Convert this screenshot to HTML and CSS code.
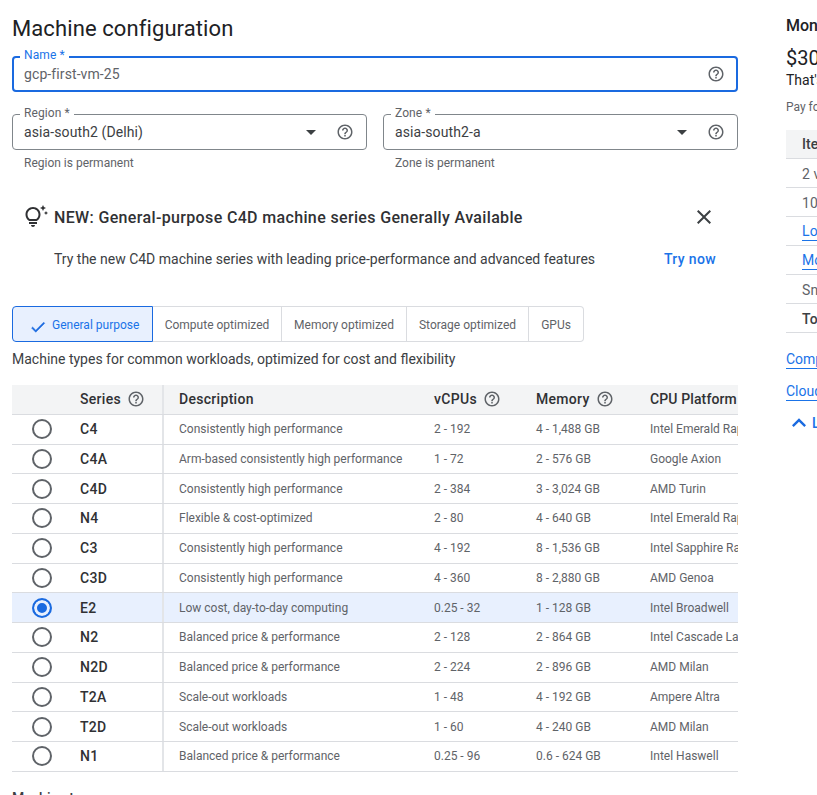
FILE: index.html
```html
<!DOCTYPE html>
<html lang="en">
<head>
<meta charset="utf-8">
<title>Machine configuration</title>
<link rel="stylesheet" href="styles.css">
</head>
<body>
<svg class="defs" width="0" height="0" aria-hidden="true">
  <symbol id="help" viewBox="0 0 24 24"><path d="M11 18h2v-2h-2v2zm1-16C6.48 2 2 6.48 2 12s4.48 10 10 10 10-4.48 10-10S17.52 2 12 2zm0 18c-4.41 0-8-3.59-8-8s3.59-8 8-8 8 3.59 8 8-3.59 8-8 8zm0-14c-2.21 0-4 1.79-4 4h2c0-1.1.9-2 2-2s2 .9 2 2c0 2-3 1.75-3 5h2c0-2.25 3-2.5 3-5 0-2.21-1.79-4-4-4z"/></symbol>
</svg>
<div class="page">
  <main class="main">
    <h1 class="title">Machine configuration</h1>

    <div class="field field-active">
      <span class="notch notch-active">Name *</span>
      <span class="value">gcp-first-vm-25</span>
      <svg class="help"><use href="#help"/></svg>
    </div>

    <div class="selects">
      <div>
        <div class="field">
          <span class="notch">Region *</span>
          <span class="value value-dark">asia-south2 (Delhi)</span>
          <span class="caret"></span>
          <svg class="help"><use href="#help"/></svg>
        </div>
        <p class="hint">Region is permanent</p>
      </div>
      <div>
        <div class="field">
          <span class="notch">Zone *</span>
          <span class="value value-dark">asia-south2-a</span>
          <span class="caret"></span>
          <svg class="help"><use href="#help"/></svg>
        </div>
        <p class="hint">Zone is permanent</p>
      </div>
    </div>

    <section class="banner">
      <div class="banner-head">
        <svg class="bulb" viewBox="0 0 24 24"><path d="M7 20h4c0 1.1-.9 2-2 2s-2-.9-2-2zm-2-1h8v-2H5v2zm11.5-9.5c0 3.82-2.66 5.86-3.77 6.5H5.27C4.16 15.36 1.5 13.32 1.5 9.5 1.5 5.36 4.86 2 9 2s7.5 3.36 7.5 7.5zm-2 0C14.5 6.47 12.03 4 9 4S3.5 6.47 3.5 9.5c0 2.47 1.49 3.89 2.35 4.5h6.3c.86-.61 2.35-2.03 2.35-4.5zm6.87-2.13L20 8l1.37.63L22 10l.63-1.37L24 8l-1.37-.63L22 6l-.63 1.37zM19 6l.94-2.06L22 3l-2.06-.94L19 0l-.94 2.06L16 3l2.06.94L19 6z"/></svg>
        <h2 class="banner-title">NEW: General-purpose C4D machine series Generally Available</h2>
        <svg class="close" viewBox="0 0 24 24"><path d="M19 6.41 17.59 5 12 10.59 6.41 5 5 6.41 10.59 12 5 17.59 6.41 19 12 13.41 17.59 19 19 17.59 13.41 12z"/></svg>
      </div>
      <div class="banner-body">
        <p class="banner-text">Try the new C4D machine series with leading price-performance and advanced features</p>
        <a class="try">Try now</a>
      </div>
    </section>

    <div class="tabs">
      <div class="tab tab-on">
        <svg class="check" viewBox="0 0 24 24"><path d="M9 16.17 4.83 12l-1.42 1.41L9 19 21 7l-1.41-1.41z"/></svg>
        General purpose
      </div>
      <div class="tab tab-w1">Compute optimized</div>
      <div class="tab tab-w2">Memory optimized</div>
      <div class="tab tab-w3">Storage optimized</div>
      <div class="tab tab-w4">GPUs</div>
    </div>
    <p class="tab-desc">Machine types for common workloads, optimized for cost and flexibility</p>

    <div class="table">
      <div class="row head">
        <div></div>
        <div class="cell">Series <svg class="help help-sm"><use href="#help"/></svg></div>
        <div class="cell cell-desc">Description</div>
        <div class="cell">vCPUs <svg class="help help-sm"><use href="#help"/></svg></div>
        <div class="cell">Memory <svg class="help help-sm"><use href="#help"/></svg></div>
        <div class="cell cell-platform">CPU Platform</div>
      </div>
      <div class="row"><div class="cell-radio"><span class="radio"></span></div><div class="cell name">C4</div><div class="cell cell-desc">Consistently high performance</div><div class="cell">2 - 192</div><div class="cell">4 - 1,488 GB</div><div class="cell">Intel Emerald Rapids</div></div>
      <div class="row"><div class="cell-radio"><span class="radio"></span></div><div class="cell name">C4A</div><div class="cell cell-desc">Arm-based consistently high performance</div><div class="cell">1 - 72</div><div class="cell">2 - 576 GB</div><div class="cell">Google Axion</div></div>
      <div class="row"><div class="cell-radio"><span class="radio"></span></div><div class="cell name">C4D</div><div class="cell cell-desc">Consistently high performance</div><div class="cell">2 - 384</div><div class="cell">3 - 3,024 GB</div><div class="cell">AMD Turin</div></div>
      <div class="row"><div class="cell-radio"><span class="radio"></span></div><div class="cell name">N4</div><div class="cell cell-desc">Flexible &amp; cost-optimized</div><div class="cell">2 - 80</div><div class="cell">4 - 640 GB</div><div class="cell">Intel Emerald Rapids</div></div>
      <div class="row"><div class="cell-radio"><span class="radio"></span></div><div class="cell name">C3</div><div class="cell cell-desc">Consistently high performance</div><div class="cell">4 - 192</div><div class="cell">8 - 1,536 GB</div><div class="cell">Intel Sapphire Rapids</div></div>
      <div class="row"><div class="cell-radio"><span class="radio"></span></div><div class="cell name">C3D</div><div class="cell cell-desc">Consistently high performance</div><div class="cell">4 - 360</div><div class="cell">8 - 2,880 GB</div><div class="cell">AMD Genoa</div></div>
      <div class="row row-on"><div class="cell-radio"><span class="radio radio-on"></span></div><div class="cell name">E2</div><div class="cell cell-desc">Low cost, day-to-day computing</div><div class="cell">0.25 - 32</div><div class="cell">1 - 128 GB</div><div class="cell">Intel Broadwell</div></div>
      <div class="row"><div class="cell-radio"><span class="radio"></span></div><div class="cell name">N2</div><div class="cell cell-desc">Balanced price &amp; performance</div><div class="cell">2 - 128</div><div class="cell">2 - 864 GB</div><div class="cell">Intel Cascade Lake</div></div>
      <div class="row"><div class="cell-radio"><span class="radio"></span></div><div class="cell name">N2D</div><div class="cell cell-desc">Balanced price &amp; performance</div><div class="cell">2 - 224</div><div class="cell">2 - 896 GB</div><div class="cell">AMD Milan</div></div>
      <div class="row"><div class="cell-radio"><span class="radio"></span></div><div class="cell name">T2A</div><div class="cell cell-desc">Scale-out workloads</div><div class="cell">1 - 48</div><div class="cell">4 - 192 GB</div><div class="cell">Ampere Altra</div></div>
      <div class="row"><div class="cell-radio"><span class="radio"></span></div><div class="cell name">T2D</div><div class="cell cell-desc">Scale-out workloads</div><div class="cell">1 - 60</div><div class="cell">4 - 240 GB</div><div class="cell">AMD Milan</div></div>
      <div class="row"><div class="cell-radio"><span class="radio"></span></div><div class="cell name">N1</div><div class="cell cell-desc">Balanced price &amp; performance</div><div class="cell">0.25 - 96</div><div class="cell">0.6 - 624 GB</div><div class="cell">Intel Haswell</div></div>
    </div>
    <h3 class="next">Machine type</h3>
  </main>

  <aside class="side">
    <h2 class="side-title">Monthly estimate</h2>
    <div class="price">$30.42</div>
    <div class="hourly">That's about $0.04 hourly</div>
    <p class="pay">Pay for what you use: no upfront costs and per second billing</p>
    <div class="items">
      <div class="item item-head">Item</div>
      <div class="item">2 vCPU + 4 GB memory</div>
      <div class="item">10 GB balanced persistent disk</div>
      <div class="item"><a class="link">Logging</a></div>
      <div class="item"><a class="link">Monitoring</a></div>
      <div class="item">Snapshot schedule</div>
      <div class="item item-total">Total</div>
    </div>
    <div class="side-link"><a class="link">Compute Engine pricing</a></div>
    <div class="side-link side-link-2"><a class="link">Cloud Pricing Calculator</a></div>
    <div class="less">
      <svg class="chev" viewBox="0 0 24 24"><path d="M7.41 15.41 12 10.83l4.59 4.58L18 14l-6-6-6 6z"/></svg>
      Less
    </div>
  </aside>
</div>
</body>
</html>
```
FILE: styles.css
```css
* { box-sizing: border-box; }
html, body { margin: 0; height: 795px; overflow: hidden; background: #fff; }
body { font-family: Roboto, "Liberation Sans", sans-serif; color: #202124; }
.defs { position: absolute; }
h1, h2, h3, p { margin: 0; font-weight: 400; }
.page { display: flex; gap: 48px; padding: 0 0 0 12px; width: 1200px; }
.main { width: 726px; flex: none; }
.title { font-size: 22px; line-height: 28px; padding-top: 15px; height: 56px; letter-spacing: .1px; }

.field { position: relative; height: 36px; border: 1px solid #80868b; border-radius: 4px; display: flex; align-items: center; padding: 0 12px 0 11px; }
.field-active { border: 2px solid #1a6ae0; padding: 0 11px 0 10px; }
.notch { position: absolute; left: 7px; top: -9px; padding: 0 4px; background: #fff; font-size: 12px; line-height: 14px; color: #5f6368; letter-spacing: .1px; }
.notch-active { left: 6px; top: -10px; color: #1a73e8; }
.value { flex: 1; font-size: 14px; color: #5f6368; letter-spacing: .1px; }
.value-dark { color: #3c4043; }
.help { width: 18px; height: 18px; fill: #5f6368; flex: none; display: block; }
.caret { width: 0; height: 0; border-left: 5px solid transparent; border-right: 5px solid transparent; border-top: 5px solid #3c4043; margin-right: 20px; }
.selects { display: grid; grid-template-columns: 355px 355px; gap: 16px; margin-top: 22px; }
.hint { font-size: 12px; line-height: 14px; color: #5f6368; padding: 6px 0 0 12px; }

.banner { margin-top: 35px; height: 101px; padding: 0 12px; position: relative; }
.banner-head { display: flex; align-items: center; height: 24px; }
.bulb { width: 24px; height: 24px; flex: none; fill: #303134; }
.banner-title { font-size: 16px; font-weight: 500; margin-left: 6px; flex: 1; color: #303134; letter-spacing: .35px; white-space: nowrap; }
.close { width: 24px; height: 24px; fill: #3c4043; flex: none; margin-right: 10px; }
.banner-body { display: flex; justify-content: space-between; padding-left: 30px; margin-top: 20px; align-items: center; padding-right: 10px; }
.banner-text { font-size: 14px; line-height: 20px; color: #3c4043; }
.try { font-size: 14px; font-weight: 500; color: #1a73e8; letter-spacing: .35px; }

.tabs { display: flex; height: 36px; }
.tab { display: flex; align-items: center; justify-content: center; padding-top: 1px; font-size: 12px; color: #5f6368; border: 1px solid #dadce0; border-left: none; white-space: nowrap; }
.tab-on { width: 141px; background: #e8f0fe; border: 1px solid #1a6ae0; border-radius: 4px 0 0 4px; color: #1a73e8; justify-content: flex-start; padding-left: 16px; }
.check { width: 18px; height: 18px; fill: #1a6ae0; stroke: #1a6ae0; stroke-width: .6; margin: 4px 5px 0 0; }
.tab-w1 { width: 129px; }
.tab-w2 { width: 125px; }
.tab-w3 { width: 122px; }
.tab-w4 { width: 55px; border-radius: 0 4px 4px 0; }
.tab-desc { font-size: 14px; line-height: 20px; margin-top: 7px; color: #3c4043; }

.table { margin-top: 16px; overflow: hidden; width: 726px; }
.row { display: grid; grid-template-columns: 68px 82px 272px 102px 114px 200px; height: 29.75px; align-items: stretch; border-bottom: 1px solid #dadce0; font-size: 12px; color: #5f6368; }
.row > div { display: flex; align-items: center; white-space: nowrap; }
.head { background: #f3f4f5; font-size: 14px; font-weight: 500; color: #303134; }
.row.head > div { letter-spacing: .3px; }
.row.head > .cell-platform { letter-spacing: .12px; }
.help-sm { margin-left: 6px; width: 18px; height: 18px; font-weight: 400; }
.cell-desc { border-left: 2px solid #e3e5e8; padding-left: 15px; }
.cell-radio { padding-left: 20px; }
.radio { width: 20px; height: 20px; border: 2px solid #5f6368; border-radius: 50%; display: block; }
.radio-on { border-color: #1a6ae0; background: #1a6ae0; box-shadow: inset 0 0 0 3px #e8f0fe; }
.row > .name { font-size: 14px; font-weight: 500; color: #303134; letter-spacing: .3px; }
.row-on { background: #e8f0fe; }
.next { font-size: 14px; font-weight: 500; margin-top: 18px; color: #3c4043; }

.side { width: 340px; flex: none; white-space: nowrap; }
.side-title { font-size: 16px; font-weight: 500; line-height: 20px; padding-top: 16px; color: #202124; height: 36px; }
.price { font-size: 20px; line-height: 24px; margin-top: 10px; color: #202124; }
.hourly { font-size: 14px; line-height: 20px; color: #202124; }
.pay { font-size: 12px; line-height: 14px; margin-top: 10px; color: #5f6368; }
.items { margin-top: 16px; }
.item { height: 29px; display: flex; align-items: center; padding: 1px 0 0 16px; font-size: 14px; color: #5f6368; border-bottom: 1px solid #dadce0; letter-spacing: .1px; }
.item-head { height: 29px; padding-top: 0; background: #f3f4f5; font-weight: 500; color: #3c4043; }
.item-total { font-weight: 500; color: #3c4043; }
.link { color: #1a73e8; border-bottom: 1px solid #1a73e8; font-size: 14px; line-height: 17px; display: inline-block; }
.side-link { margin-top: 18px; line-height: 0; }
.side-link-2 { margin-top: 14px; }
.less { display: flex; align-items: center; margin: 8px 0 0 -1px; font-size: 14px; font-weight: 500; color: #1a73e8; gap: 0; }
.chev { width: 28px; height: 28px; fill: #1a6ae0; margin-right: -1px; }
```
